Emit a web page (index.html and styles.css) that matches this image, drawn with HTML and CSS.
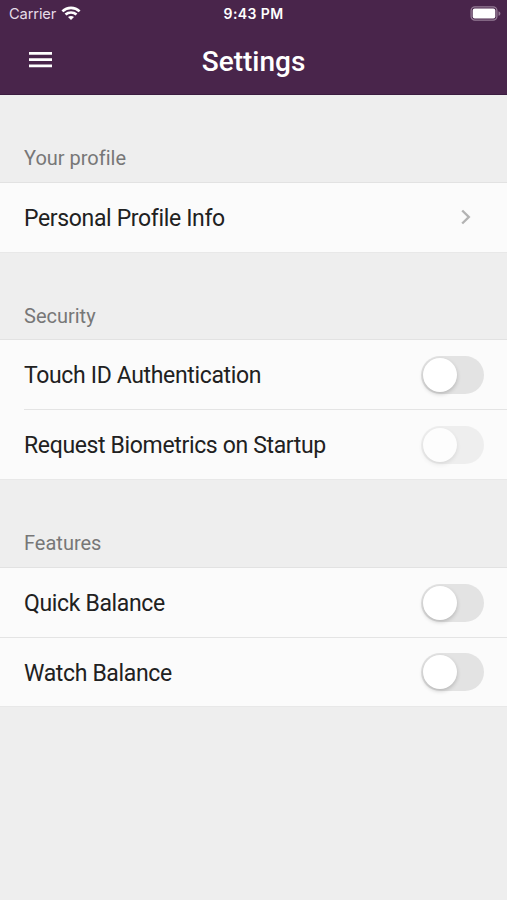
FILE: index.html
```html
<!DOCTYPE html>
<html lang="en">
<head>
<meta charset="utf-8">
<title>Settings</title>
<link rel="stylesheet" href="styles.css">
</head>
<body>
<header class="top">
  <div class="status">
    <div class="carrier"><span class="carrier-name">Carrier</span>
      <svg class="wifi" width="20" height="15" viewBox="0 0 20 15" fill="none" stroke="#fff" stroke-width="2.700">
        <path d="M1.4 5.4C6.2.8 13.8.8 18.600 5.400M4.500 8.600C7.600 5.800 12.400 5.800 15.500 8.600"/>
        <path d="M10 14 7 11C8.700 9.500 11.300 9.500 13 11Z" fill="#fff" stroke="none"/>
      </svg>
    </div>
    <time class="clock">9:43 PM</time>
    <svg class="battery" width="31" height="15" viewBox="0 0 31 15">
      <rect x="1.100" y=".9" width="25.800" height="13.200" rx="3.800" fill="none" stroke="#957c96" stroke-width="1.300"/>
      <rect x="2.700" y="2.500" width="22.600" height="10" rx="2" fill="#fff"/>
      <path d="M28.500 5.200C31 6 31 9 28.500 9.800Z" fill="#957c96"/>
    </svg>
  </div>
  <div class="bar">
    <svg class="menu" width="23" height="16" viewBox="0 0 23 16" fill="#fff"><path d="M0 0H23V2.800H0ZM0 6.300H23V9.100H0ZM0 12.500H23V15.300H0Z"/></svg>
    <h1 class="title">Settings</h1>
  </div>
</header>
<main>
  <section>
    <h2 class="heading">Your profile</h2>
    <div class="list">
      <div class="row"><span class="label">Personal Profile Info</span>
        <svg class="chevron" width="10" height="16" viewBox="0 0 10 16" fill="none" stroke="#b3b3b3" stroke-width="2.400"><path d="M1.200 1.500 7.800 8 1.200 14.500"/></svg>
      </div>
    </div>
  </section>
  <section>
    <h2 class="heading security">Security</h2>
    <div class="list">
      <div class="row"><span class="label">Touch ID Authentication</span><span class="switch"></span></div>
      <div class="row inset"><span class="label">Request Biometrics on Startup</span><span class="switch disabled"></span></div>
    </div>
  </section>
  <section>
    <h2 class="heading">Features</h2>
    <div class="list features">
      <div class="row"><span class="label">Quick Balance</span><span class="switch"></span></div>
      <div class="row divided"><span class="label">Watch Balance</span><span class="switch"></span></div>
    </div>
  </section>
</main>
</body>
</html>
```
FILE: styles.css
```css
* { box-sizing: border-box; }
body { margin: 0; min-height: 900px; background: #eee; color: #212121; font-family: Roboto, "Liberation Sans", sans-serif; font-variant-ligatures: none; }
.top { height: 95px; background: #49254b; border-bottom: 1px solid #3b1c40; color: #fff; }
.status { display: grid; grid-template-columns: 1fr auto 1fr; align-items: center; height: 27px; padding: 0 6px 0 9px; }
.carrier { display: flex; align-items: center; gap: 5px; font: 400 14.7px/20px Inter, sans-serif; letter-spacing: -.15px; color: #e6dce8; }
.wifi { margin-top: -1px; }
.clock { margin-left: -3px; font: 600 14px/20px Inter, sans-serif; letter-spacing: .4px; }
.battery { justify-self: end; }
.bar { display: grid; grid-template-columns: 60px 1fr 60px; align-items: center; height: 67px; }
.menu { margin: -1px 0 0 29px; }
.title { margin: 2px 0 0; text-align: center; font-size: 28px; line-height: 34px; font-weight: 500; }
.heading { height: 87px; margin: 0; padding: 51px 24px 0; font-size: 20px; line-height: 24px; font-weight: 400; color: #777; }
.security { height: 86px; }
.list { background: #fbfbfb; border-top: 1px solid #e2e2e2; border-bottom: 1px solid #e8e8e8; }
.row { display: flex; align-items: center; justify-content: space-between; height: 69px; padding: 0 23px 0 24px; }
.row + .row { height: 70px; border-top: 1px solid #e4e4e4; }
.row.inset { margin-left: 24px; padding-left: 0; }
.features .divided { height: 69px; }
.label { padding-top: 3px; font-size: 23px; line-height: 30px; letter-spacing: -.35px; }
.chevron { margin: -1px 13px 0 0; }
.switch { width: 63px; height: 38px; padding: 2px; border-radius: 19px; background: #e3e3e3; }
.switch::before { content: ""; display: block; width: 34px; height: 34px; border-radius: 50%; background: #fff; box-shadow: 0 2px 4px #0003; }
.disabled { opacity: .5; }
```
